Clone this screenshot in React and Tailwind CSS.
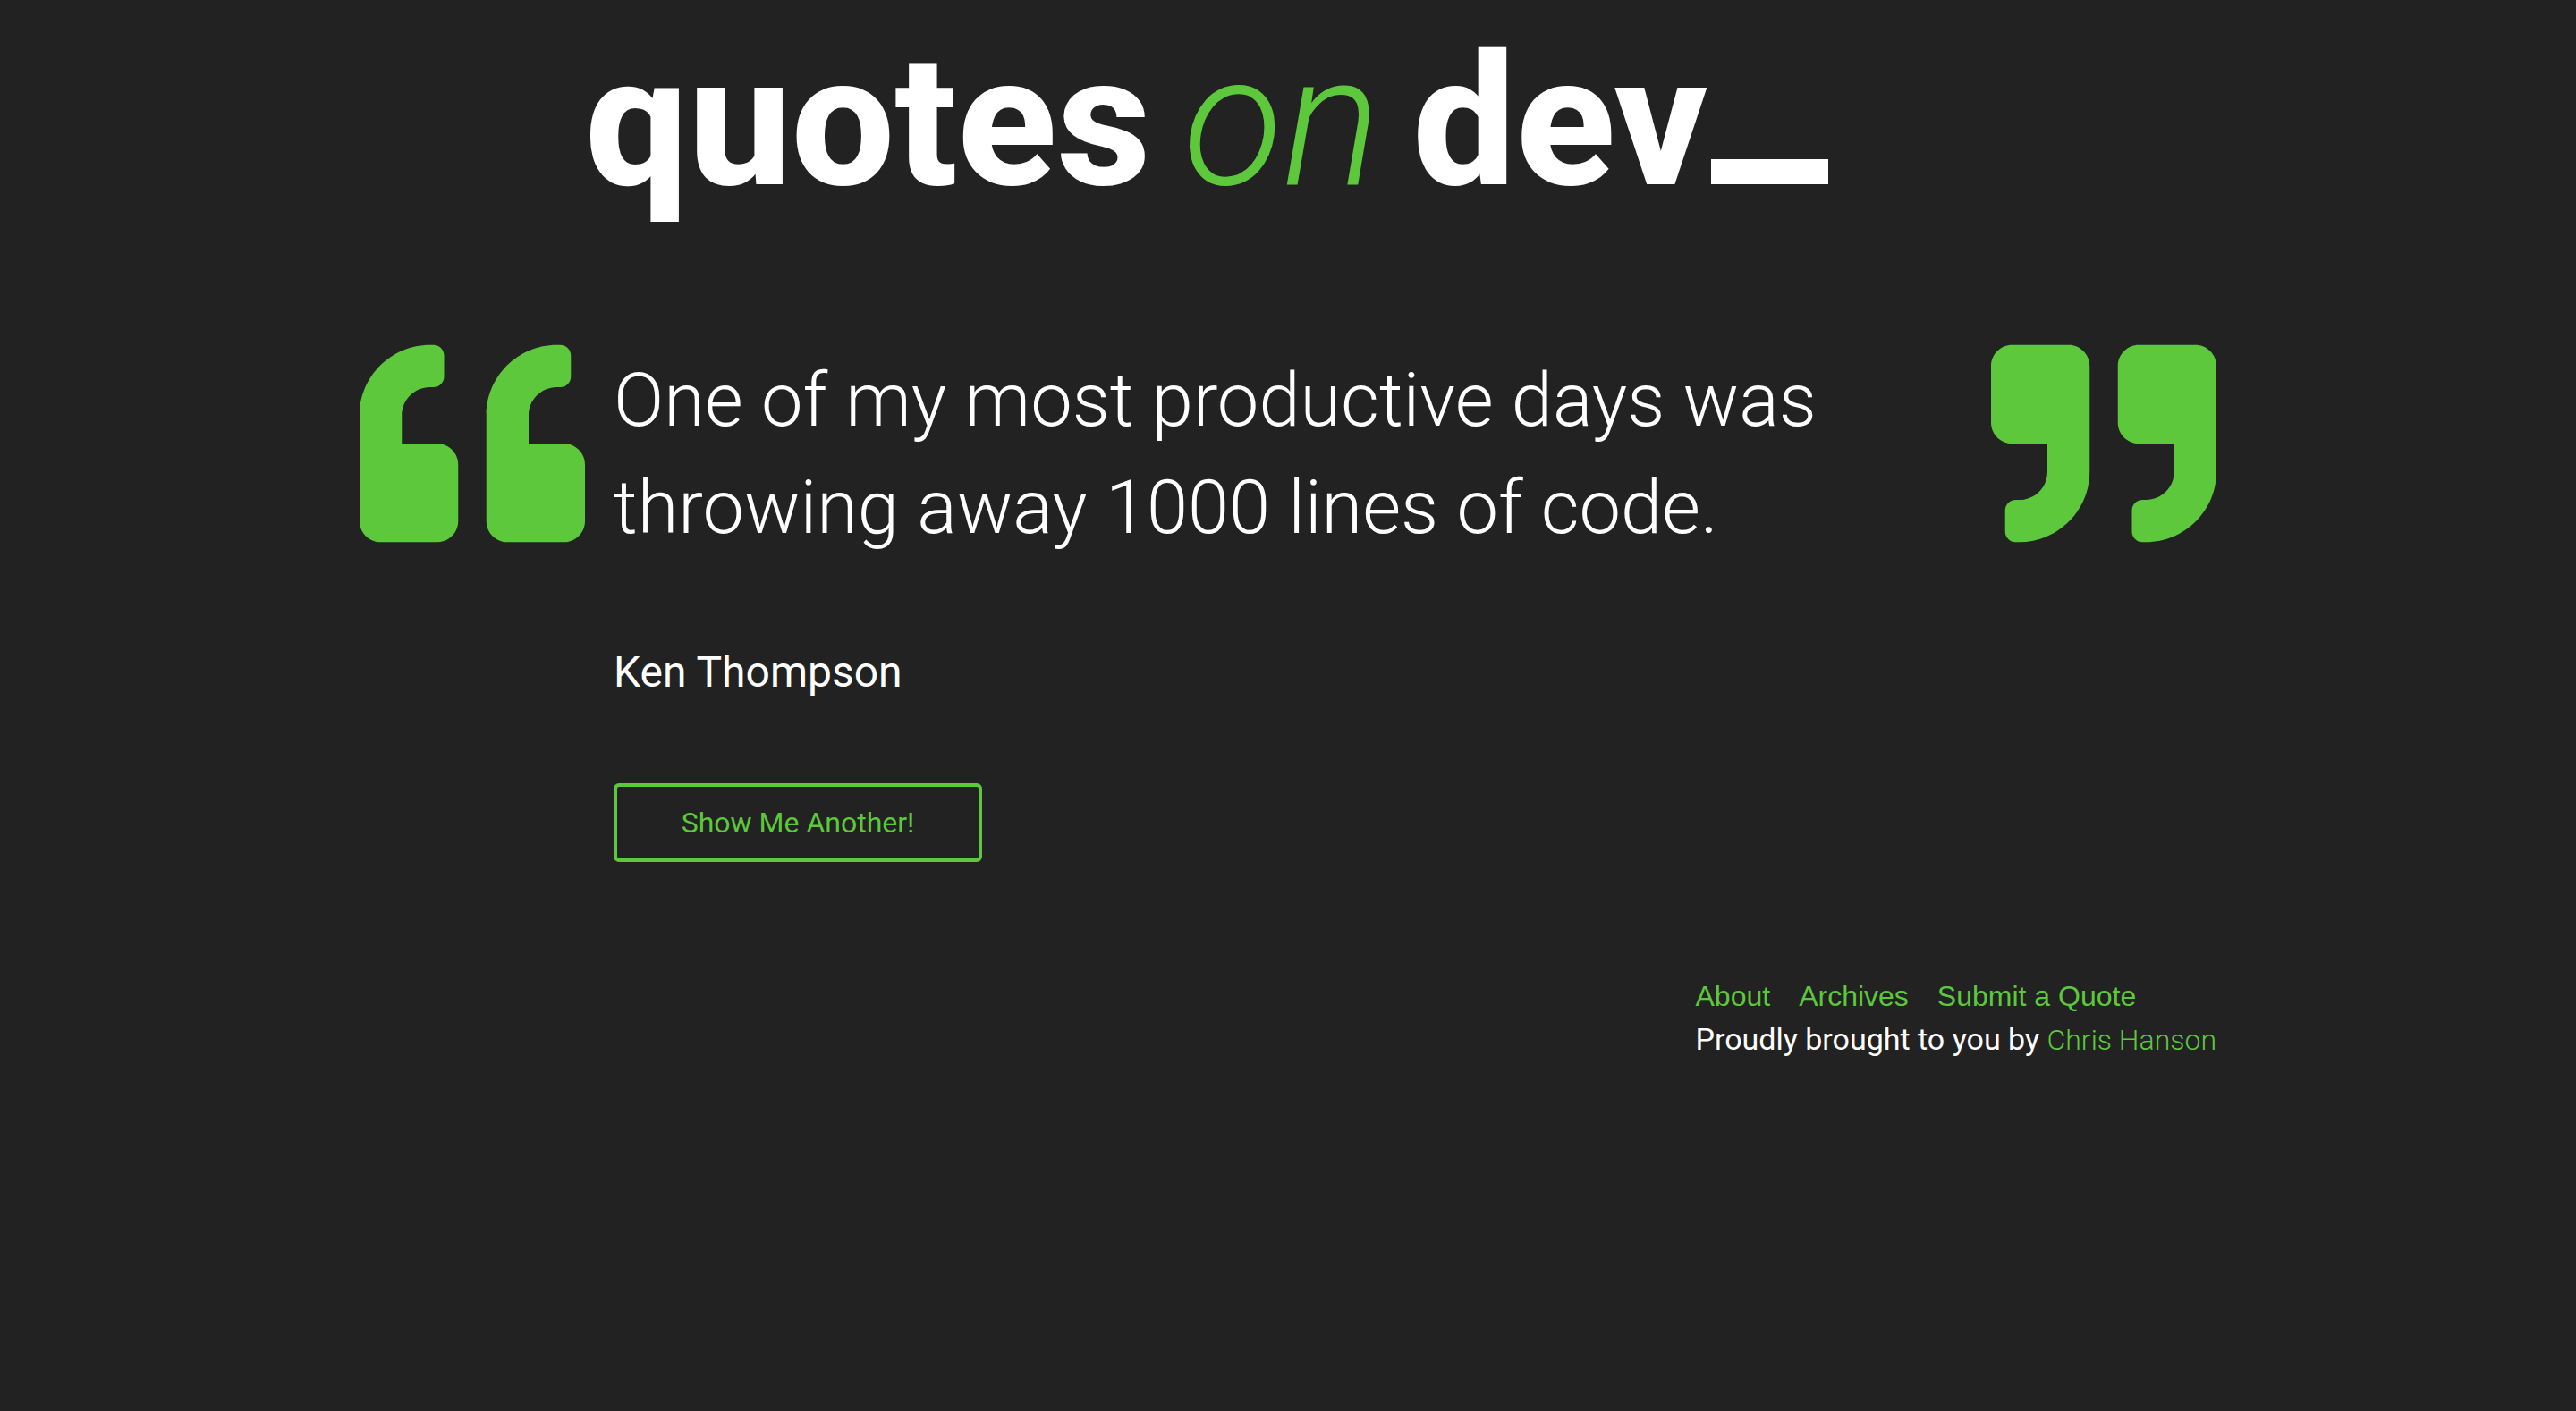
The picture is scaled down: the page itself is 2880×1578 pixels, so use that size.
import { FaQuoteLeft, FaQuoteRight } from "react-icons/fa";

const links = ["About", "Archives", "Submit a Quote"];

function Wordmark() {
  return (
    <h1 className="pl-[252px] text-[205px] leading-[240px] font-extrabold">
      <a href="#home" className="flex items-baseline gap-9 whitespace-nowrap">
        <span>quotes</span>
        <em className="font-light text-[#5dc83b]">on</em>
        <span>
          dev
          <span className="ml-1 inline-block h-7 w-[131px] bg-white" />
        </span>
      </a>
    </h1>
  );
}

export default function App() {
  return (
    <div className="min-h-screen bg-[#222222] font-['Roboto',sans-serif] text-white">
      <div className="mx-auto w-full max-w-[2076px] pt-4">
        <header>
          <Wordmark />
        </header>

        <main className="mt-[114px] flex items-start gap-8">
          <FaQuoteLeft aria-hidden="true" className="size-[252px] shrink-0 text-[#5dc83b]" />
          <article className="min-w-0 flex-1 pt-[18px]">
            <blockquote className="text-[83px] leading-[120px] font-light">
              One of my most productive days was throwing away 1000 lines of code.
            </blockquote>
            <p className="mt-[92px] text-[48px] leading-[64px]">Ken Thompson</p>
            <button
              type="button"
              className="mt-[92px] h-[88px] w-[412px] rounded-md border-4 border-[#5dc83b] text-[32px] text-[#5dc83b]"
            >
              Show Me Another!
            </button>
          </article>
          <FaQuoteRight aria-hidden="true" className="size-[252px] shrink-0 text-[#5dc83b]" />
        </main>

        <footer className="mt-[126px] flex justify-end leading-[48px]">
          <div>
            <nav className="flex gap-8 font-['Liberation_Sans',sans-serif] text-[32px] text-[#5dc83b]">
              {links.map((label) => (
                <a key={label} href="#nav">
                  {label}
                </a>
              ))}
            </nav>
            <p className="text-[34px]">
              Proudly brought to you by{" "}
              <a href="#author" className="text-[32px] font-light text-[#5dc83b]">
                Chris Hanson
              </a>
            </p>
          </div>
        </footer>
      </div>
    </div>
  );
}
